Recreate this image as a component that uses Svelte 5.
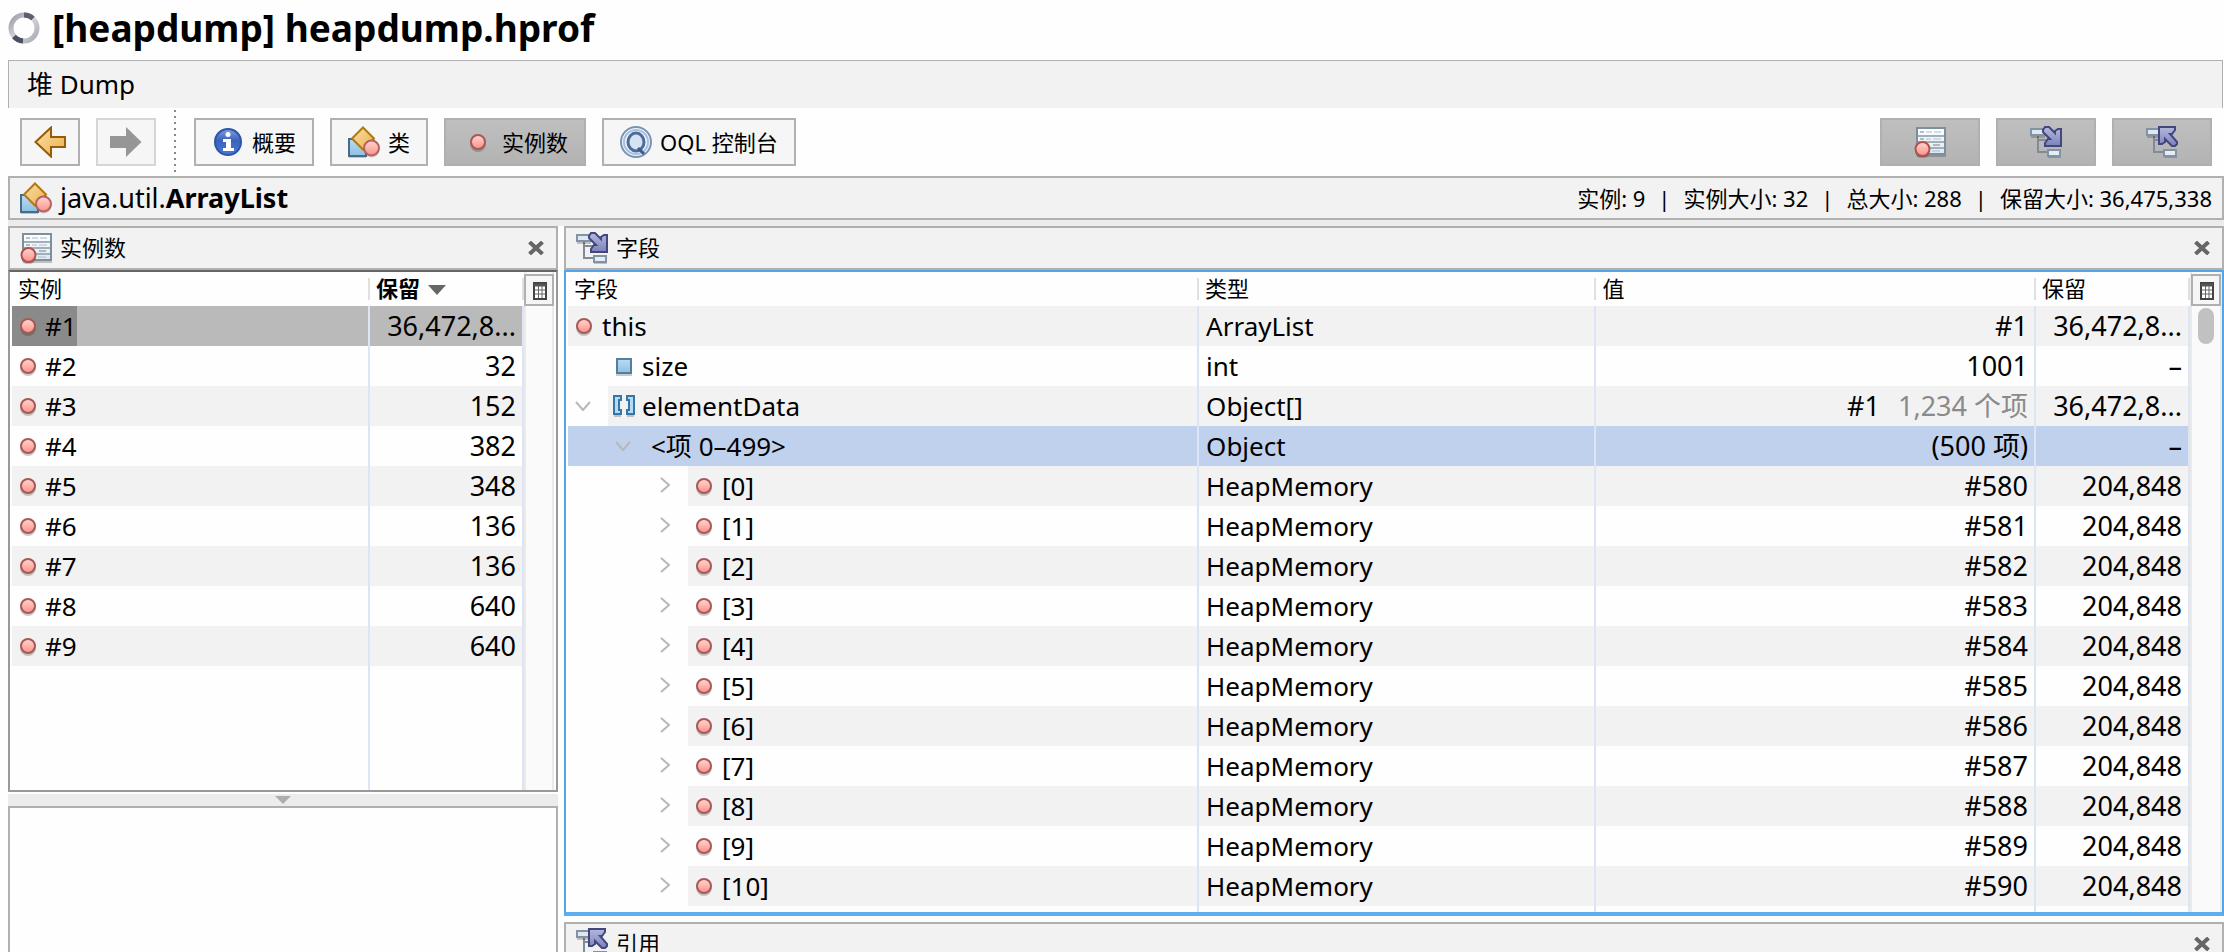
<script>
  const instances = [
    ['#1', '36,472,8...'], ['#2', '32'], ['#3', '152'], ['#4', '382'], ['#5', '348'],
    ['#6', '136'], ['#7', '136'], ['#8', '640'], ['#9', '640']
  ];
  let selected = $state(0);

  const fields = [
    { name: 'this', level: 0, icon: 'ball', type: 'ArrayList', value: '#1', retained: '36,472,8...' },
    { name: 'size', level: 1, icon: 'square', type: 'int', value: '1001', retained: '–' },
    { name: 'elementData', level: 1, icon: 'array', open: true, type: 'Object[]', value: '#1', note: '1,234 个项', retained: '36,472,8...' },
    { name: '<项 0–499>', level: 2, open: true, type: 'Object', value: '(500 项)', retained: '–', chosen: true },
    ...Array.from({ length: 11 }, (_, i) => ({
      name: `[${i}]`, level: 3, icon: 'ball', open: false, type: 'HeapMemory', value: `#${580 + i}`, retained: '204,848'
    }))
  ];
</script>

<svelte:head><title>heapdump.hprof</title></svelte:head>

<svg class="defs" aria-hidden="true">
  <defs>
    <linearGradient id="pink" x1="0" y1="0" x2="0" y2="1"><stop offset="0" stop-color="#ffd6d0" /><stop offset=".5" stop-color="#ffb3ad" /><stop offset="1" stop-color="#fb9089" /></linearGradient>
    <linearGradient id="gold" x1="0" y1="0" x2="1" y2="1"><stop offset="0" stop-color="#f8dfa6" /><stop offset="1" stop-color="#eeb04e" /></linearGradient>
    <linearGradient id="sky" x1="0" y1="0" x2="0" y2="1"><stop offset="0" stop-color="#b9dcf2" /><stop offset="1" stop-color="#8fc0e4" /></linearGradient>
    <linearGradient id="navy" x1="0" y1="0" x2="0" y2="1"><stop offset="0" stop-color="#b4b8de" /><stop offset="1" stop-color="#7c82b8" /></linearGradient>
    <linearGradient id="info" x1="0" y1="0" x2="0" y2="1"><stop offset="0" stop-color="#7f9fe0" /><stop offset=".45" stop-color="#3a62bd" /><stop offset="1" stop-color="#4a7ad2" /></linearGradient>
    <linearGradient id="sheet" x1="0" y1="0" x2="0" y2="1"><stop offset="0" stop-color="#ffffff" /><stop offset="1" stop-color="#dde7f0" /></linearGradient>
    <linearGradient id="ring" x1="0" y1="0" x2="1" y2="1"><stop offset="0" stop-color="#9a9ca6" /><stop offset=".5" stop-color="#d4d5da" /><stop offset="1" stop-color="#a9aab2" /></linearGradient>
  </defs>
</svg>

{#snippet ball()}
  <svg class="ball" viewBox="0 0 18 20" aria-hidden="true">
    <circle cx="9" cy="12" r="8" fill="#000" opacity=".2" />
    <circle cx="9" cy="10" r="7" fill="url(#pink)" stroke="#a65a55" stroke-width="2" />
  </svg>
{/snippet}

{#snippet shapes()}
  <svg class="icon" viewBox="0 0 32 32" aria-hidden="true">
    <path d="M1 31.500h17" stroke="#000" opacity=".2" />
    <rect x="1" y="13" width="17" height="17" fill="url(#sky)" stroke="#496b87" stroke-width="2" />
    <path d="M15 1.500 26 12.500 15 23.500 4 12.500z" fill="url(#gold)" stroke="#b0780f" stroke-width="2" />
    <circle cx="23.500" cy="23.500" r="8" fill="#000" opacity=".15" />
    <circle cx="23.500" cy="22" r="7.500" fill="url(#pink)" stroke="#b3645f" stroke-width="2" />
  </svg>
{/snippet}

{#snippet listIcon()}
  <svg class="icon" viewBox="0 0 32 32" aria-hidden="true">
    <path d="M3 30h30" stroke="#000" stroke-width="2" opacity=".2" />
    <rect x="3" y="2" width="28" height="26" fill="url(#sheet)" stroke="#7d8e9c" stroke-width="2" />
    <path d="M4 10h26M4 16h26M4 22h26" stroke="#9fb0bd" stroke-width="2" />
    <path d="M6 6h4M6 13h4M19 19h7" stroke="#77828c" stroke-width="1" />
    <path d="M12 6h6M20 6h7M12 13h5M19 13h8M18 25h8" stroke="#b4bcc3" stroke-width="1" />
    <circle cx="8.500" cy="25" r="7.500" fill="#000" opacity=".2" />
    <circle cx="8.500" cy="23" r="7" fill="url(#pink)" stroke="#b3514c" stroke-width="2" />
  </svg>
{/snippet}

{#snippet treeBase()}
  <path d="M8 9v17h10M8 14h10" fill="none" stroke="#7f8b97" stroke-width="2" />
  <path d="M1 11h14M18 32h13" stroke="#000" stroke-width="2" opacity=".2" />
  <rect x="1" y="3" width="14" height="6" fill="#dfe8f0" stroke="#8294a3" stroke-width="2" />
  <rect x="18" y="24" width="12" height="6" fill="#e6eef5" stroke="#8294a3" stroke-width="2" />
{/snippet}

{#snippet fieldsIcon()}
  <svg class="icon" viewBox="0 0 32 32" aria-hidden="true">
    {@render treeBase()}
    <path d="M13 4 15 1h4l6 6V5l3-2h3v17H15v-3l3-4h2l-7-7z" fill="url(#navy)" stroke="#43477f" stroke-width="2" />
  </svg>
{/snippet}

{#snippet refsIcon()}
  <svg class="icon" viewBox="0 0 32 32" aria-hidden="true">
    {@render treeBase()}
    <path d="M13 1h16v3l-3 4h-2l7 8v2l-2 2h-3l-7-7v3l-3 2h-3z" fill="url(#navy)" stroke="#43477f" stroke-width="2" />
  </svg>
{/snippet}

{#snippet closeButton(label)}
  <button class="close" aria-label={label}>
    <svg viewBox="0 0 16 14" aria-hidden="true"><path d="M1.500 1 14.500 13M14.500 1 1.500 13" stroke="#666" stroke-width="4" /></svg>
  </button>
{/snippet}

{#snippet columnsButton()}
  <button class="columns" aria-label="选择列">
    <svg viewBox="0 0 14 18" aria-hidden="true"><rect x="1" y="1" width="12" height="16" fill="#fff" stroke="#444" stroke-width="2" /><path d="M1 3h12" stroke="#555" stroke-width="3" /><path d="M2 8h10M2 12h10M5.500 4v12M9 4v12" stroke="#666" /></svg>
  </button>
{/snippet}

<div class="app">
  <header class="title">
    <svg class="icon" viewBox="0 0 32 32" aria-hidden="true">
      <circle cx="16" cy="16" r="13" fill="none" stroke="url(#ring)" stroke-width="5" />
      <path d="M16 3A13 13 0 0 1 25 6.500" fill="none" stroke="#5c5f70" stroke-width="5" />
      <path d="M15 29A13 13 0 0 1 6 24.500" fill="none" stroke="#4b4f62" stroke-width="5" />
    </svg>
    <h1>[heapdump] heapdump.hprof</h1>
  </header>

  <h2 class="section">堆 Dump</h2>

  <div class="toolbar">
    <button class="tool square" aria-label="后退">
      <svg class="icon" viewBox="0 0 32 32" aria-hidden="true"><path d="M1.500 16 17 1.500V11h14v10H17v9.500z" fill="url(#gold)" stroke="#995b08" stroke-width="2" /></svg>
    </button>
    <button class="tool square" disabled aria-label="前进">
      <svg class="icon" viewBox="0 0 32 32" aria-hidden="true"><path d="M31.500 16 16 1v9H0v12h16v9z" fill="#969696" /></svg>
    </button>
    <span class="divider"></span>
    <button class="tool">
      <svg class="icon" viewBox="0 0 32 32" aria-hidden="true">
        <circle cx="16" cy="16" r="13" fill="url(#info)" stroke="#2c56a8" stroke-width="2" />
        <circle cx="16" cy="8.500" r="2.500" fill="#fff" /><path d="M11 13h8v9h3v3H11v-3h3v-6h-3z" fill="#fff" />
      </svg>概要
    </button>
    <button class="tool">{@render shapes()}类</button>
    <button class="tool pressed" aria-pressed="true"><span class="ballbox">{@render ball()}</span>实例数</button>
    <button class="tool">
      <svg class="icon" viewBox="0 0 32 32" aria-hidden="true">
        <circle cx="16" cy="16" r="15" fill="#eef4fa" stroke="#7993b8" stroke-width="2" />
        <circle cx="16" cy="16" r="12" fill="none" stroke="#a9bfdb" stroke-width="2" />
        <ellipse cx="16" cy="16" rx="8" ry="9" fill="#d5e2f1" stroke="#4e6c9b" stroke-width="3" />
        <path d="M18 22 24 28" stroke="#3d5b8b" stroke-width="3" />
      </svg>OQL 控制台
    </button>
    <div class="views">
      <button class="tool pressed" aria-pressed="true" aria-label="实例数">{@render listIcon()}</button>
      <button class="tool pressed" aria-pressed="true" aria-label="字段">{@render fieldsIcon()}</button>
      <button class="tool pressed" aria-pressed="true" aria-label="引用">{@render refsIcon()}</button>
    </div>
  </div>

  <div class="classbar">
    {@render shapes()}
    <span class="classname">java.util.<b>ArrayList</b></span>
    <span class="stats"><span>实例: 9</span><i>|</i><span>实例大小: 32</span><i>|</i><span>总大小: 288</span><i>|</i><span>保留大小: 36,475,338</span></span>
  </div>

  <main class="workspace">
    <div class="left">
      <section class="panel">
        <div class="panelhead">{@render listIcon()}<h3>实例数</h3>{@render closeButton('关闭实例数')}</div>
        <div class="body">
          <div class="grid">
            <table class="instances">
              <colgroup><col /><col class="c-size" /></colgroup>
              <thead><tr><th>实例</th><th class="sorted">保留<svg viewBox="0 0 18 10" aria-hidden="true"><path d="M0 0h18L9 10z" fill="#666" /></svg></th></tr></thead>
              <tbody>
                {#each instances as [id, size], i}
                  <tr class:picked={selected === i} onclick={() => (selected = i)}>
                    <td><span class="key">{@render ball()}{id}</span></td><td class="num">{size}</td>
                  </tr>
                {/each}
                <tr class="rest"><td></td><td></td></tr>
              </tbody>
            </table>
          </div>
          <div class="track">{@render columnsButton()}</div>
        </div>
      </section>
      <div class="splitter"><svg viewBox="0 0 16 8" aria-hidden="true"><path d="M0 0h16L8 8z" fill="#adadad" /></svg></div>
      <section class="preview" aria-label="预览"></section>
    </div>

    <div class="right">
      <section class="panel focus">
        <div class="panelhead">{@render fieldsIcon()}<h3>字段</h3>{@render closeButton('关闭字段')}</div>
        <div class="body">
          <div class="grid">
            <table class="fields">
              <colgroup><col class="c-name" /><col class="c-type" /><col class="c-value" /><col class="c-size" /></colgroup>
              <thead><tr><th>字段</th><th>类型</th><th>值</th><th>保留</th></tr></thead>
              <tbody>
                {#each fields as f}
                  <tr class:chosen={f.chosen}>
                    <td class="tree">
                      <div class="node l{f.level}">
                        {#if f.level > 0}
                          <span class="twisty">
                            {#if f.open === true}
                              <svg class="down" viewBox="0 0 16 10" aria-hidden="true"><path d="M1 1l7 8 7-8" /></svg>
                            {:else if f.open === false}
                              <svg class="side" viewBox="0 0 10 16" aria-hidden="true"><path d="M1 1l8 7-8 7" /></svg>
                            {/if}
                          </span>
                        {/if}
                        <span class="label" class:plain={!f.icon}>
                          {#if f.icon === 'ball'}{@render ball()}
                          {:else if f.icon === 'square'}
                            <svg class="ball" viewBox="0 0 18 20" aria-hidden="true"><path d="M1 19h16" stroke="#000" stroke-width="2" opacity=".2" /><rect x="2" y="3" width="14" height="14" fill="url(#sky)" stroke="#557f9f" stroke-width="2" /></svg>
                          {:else if f.icon === 'array'}
                            <svg class="brackets" viewBox="0 0 22 22" aria-hidden="true"><path d="M1 21h7M14 21h7" stroke="#000" opacity=".2" stroke-width="2" /><path d="M1 1h7v4H6v10h2v4H1zM21 1h-7v4h2v10h-2v4h7z" fill="#b5dcf4" stroke="#3576a8" stroke-width="2" /></svg>
                          {/if}{f.name}
                        </span>
                      </div>
                    </td>
                    <td>{f.type}</td>
                    <td class="num">{f.value}{#if f.note}<span class="note">{f.note}</span>{/if}</td>
                    <td class="num">{f.retained}</td>
                  </tr>
                {/each}
                <tr class="rest"><td></td><td></td><td></td><td></td></tr>
              </tbody>
            </table>
          </div>
          <div class="track">{@render columnsButton()}<span class="thumb"></span></div>
        </div>
      </section>
      <section class="panel">
        <div class="panelhead">{@render refsIcon()}<h3>引用</h3>{@render closeButton('关闭引用')}</div>
      </section>
    </div>
  </main>
</div>

<style>
  :global(body) { background: #fff; }
  .app {
    display: flex; flex-direction: column; height: 100vh; overflow: hidden; padding-left: 8px;
    box-sizing: border-box; color: #000; background: #fefefe;
    font: 26px/40px "Noto Sans", "Noto Sans CJK SC", sans-serif;
  }
  .app *, .app *::before { box-sizing: border-box; }
  .defs { position: absolute; width: 0; height: 0; }
  svg { display: block; flex: none; }
  h1, h2, h3 { margin: 0; font-weight: 400; }
  button { font: inherit; color: inherit; padding: 0; margin: 0; border: 0; background: none; }
  .icon { width: 32px; height: 32px; }
  .ball { width: 18px; height: 20px; }

  .title { display: flex; align-items: center; gap: 12px; height: 60px; padding-bottom: 4px; }
  .title h1 { font-size: 37px; font-weight: 700; white-space: nowrap; }
  .section { flex: none; height: 48px; margin-right: 1px; padding: 3px 18px; font-size: 26px; background: #f2f2f2; border: 1px solid #b0b0b0; border-bottom: 0; }

  .toolbar { display: flex; align-items: center; gap: 16px; flex: none; height: 68px; padding: 0 12px; font-size: 22px; }
  .tool { display: flex; align-items: center; justify-content: center; gap: 8px; height: 48px; padding: 0 16px; border: 2px solid #b0b0b0; background: #f6f6f6; white-space: nowrap; }
  .tool.square { width: 60px; padding: 0; }
  .tool:disabled { border-color: #d6d6d6; }
  .tool.pressed { background: linear-gradient(#bfbfbf, #b3b3b3); }
  .ballbox { display: grid; place-items: center; width: 32px; }
  .divider { align-self: stretch; width: 2px; margin: 2px; background: repeating-linear-gradient(#888 0 2px, transparent 2px 6px); }
  .views { display: flex; gap: 16px; margin-left: auto; }
  .views .tool { width: 100px; }

  .classbar { display: flex; align-items: center; gap: 8px; flex: none; height: 44px; padding: 0 10px; background: #f2f2f2; border: 2px solid #b0b0b0; }
  .classname { font-size: 27px; }
  .stats { display: flex; gap: 13px; margin-left: auto; font-size: 22px; white-space: nowrap; }
  .stats i { font-style: normal; }

  .workspace { flex: 1; min-height: 0; display: grid; grid-template-columns: 550fr 1660fr; gap: 6px; padding-top: 6px; background: linear-gradient(#ececec 6px, transparent 6px); }
  .left { min-width: 0; min-height: 0; display: grid; grid-template-rows: minmax(0, 566fr) 14px minmax(0, 146fr); }
  .right { min-width: 0; min-height: 0; display: flex; flex-direction: column; gap: 6px; }
  .panel { display: flex; flex-direction: column; flex: none; min-height: 0; }
  .panelhead { display: flex; align-items: center; gap: 8px; flex: none; height: 44px; padding: 0 12px 0 10px; background: #f2f2f2; border: 2px solid #b0b0b0; font-size: 22px; }
  .panelhead h3 { padding-bottom: 2px; font-size: 22px; line-height: 24px; }
  .close { margin-left: auto; }
  .close svg { width: 16px; height: 14px; }
  .body { flex: 1; min-height: 0; display: flex; padding: 0 2px; border: 2px solid #999; border-top-color: #666; background: #fefefe; }
  .focus .body { border-color: #55a4e8; border-bottom: 4px solid #5eaef2; padding-right: 0; }
  .grid { flex: 1; min-width: 0; min-height: 0; overflow: hidden; }
  .splitter { display: grid; place-items: center; margin-top: 2px; background: #ececec; }
  .splitter svg { width: 16px; height: 8px; }
  .preview { border: 2px solid #b0b0b0; border-bottom: 0; }

  table { width: 100%; height: 100%; table-layout: fixed; border-collapse: separate; border-spacing: 0; }
  .c-size { width: 154px; }
  .c-type { width: 24.500%; }
  .c-value { width: 27.100%; }
  th { position: relative; height: 34px; padding: 0 6px 2px; text-align: left; font-size: 22px; line-height: 32px; font-weight: 400; }
  th.sorted { font-weight: 700; }
  th svg { display: inline-block; width: 18px; height: 10px; margin-left: 8px; vertical-align: 2px; }
  th::before { content: ""; position: absolute; right: 0; top: 6px; bottom: 6px; width: 2px; background: #e0e0e0; }
  td { height: 40px; padding: 0 7px; line-height: 40px; white-space: nowrap; overflow: hidden; border-right: 2px solid #dce4f6; background-clip: padding-box; }
  tbody tr:nth-child(odd) td { background-color: #f2f2f2; }
  tbody tr.rest td { height: auto; padding: 0; background: none; }
  .fields .rest td { height: 6px; line-height: 6px; }
  td.num { padding-right: 6px; font-size: 27px; text-align: right; }
  .note { margin-left: 18px; color: #8a8a8a; }

  .instances td:first-child { padding: 0; }
  .key { display: inline-flex; align-items: center; gap: 8px; height: 40px; padding-left: 7px; vertical-align: top; }
  tbody tr.picked td { background-color: #bababa; }
  .picked .key { background: #8a8a8a; }

  tbody tr td.tree { padding: 0; background-color: transparent; }
  .node { display: flex; }
  .l2 { padding-left: 40px; }
  .l3 { padding-left: 80px; }
  .twisty { display: grid; place-items: center; flex: none; width: 40px; padding-right: 10px; }
  .l0 .label { padding-left: 7px; }
  .label { display: flex; align-items: center; gap: 9px; flex: 1; padding-left: 7px; }
  .label.plain { padding-left: 3px; }
  tr:nth-child(odd) .label { background: #f2f2f2; }
  .brackets { width: 22px; height: 22px; margin: 0 -2px; }
  .twisty path { fill: none; stroke: #b8b8b8; stroke-width: 2; }
  .down { width: 16px; height: 10px; }
  .side { width: 10px; height: 16px; }
  .l3 .twisty { padding-right: 6px; padding-bottom: 2px; }
  tbody tr.chosen td, tbody tr.chosen td.tree { background-color: #c0d1ed; }

  .track { flex: none; width: 30px; background: #fafafa; border: 2px solid #eaeaea; border-width: 0 2px; display: flex; flex-direction: column; align-items: center; gap: 2px; }
  .focus .track { width: 32px; }
  .columns { display: grid; place-items: center; flex: none; width: 30px; height: 32px; margin-top: 2px; padding: 2px 0 0 2px; border: 2px solid #b0b0b0; background: #f6f6f6; }
  .columns svg { width: 14px; height: 18px; }
  .thumb { width: 16px; height: 36px; border-radius: 8px; background: #c1c1c1; }
</style>
